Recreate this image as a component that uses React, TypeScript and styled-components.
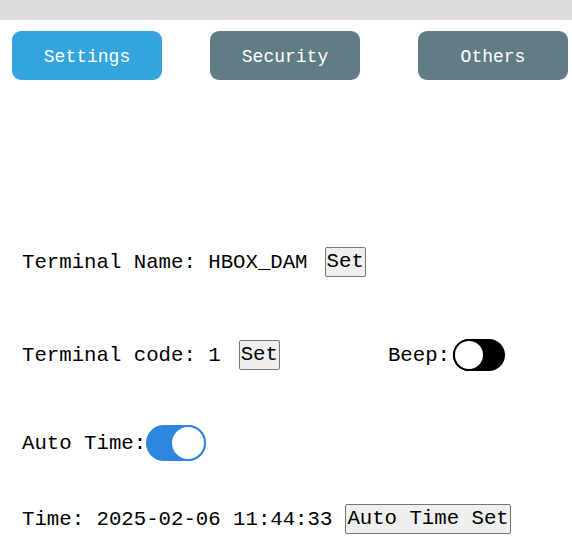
import styled, { createGlobalStyle } from "styled-components";

const GlobalStyle = createGlobalStyle`
  html, body {
    margin: 0;
    padding: 0;
    background: #ffffff;
  }
  body {
    font-family: "Liberation Mono", "Noto Sans Mono CJK SC", monospace;
    color: #000000;
  }
`;

const Page = styled.div`
  width: 572px;
  height: 557px;
  overflow: hidden;
`;

const TopBar = styled.div`
  height: 20px;
  background: #dcdcdc;
`;

const Tabs = styled.nav`
  display: flex;
  padding: 11px 0 0 12px;
`;

const Tab = styled.button<{ $active?: boolean; $offset?: number }>`
  width: 150px;
  height: 49px;
  margin-left: ${(p) => p.$offset ?? 0}px;
  border: none;
  border-radius: 9px;
  background: ${(p) => (p.$active ? "#34a4dc" : "#607c85")};
  color: #ffffff;
  font-family: "Liberation Mono", monospace;
  font-size: 18px;
  padding: 2px 0 0;
  cursor: pointer;
`;

const Content = styled.section`
  padding-left: 22px;
`;

const Row = styled.div<{ $top: number }>`
  display: flex;
  align-items: center;
  height: 40px;
  margin-top: ${(p) => p.$top}px;
  font-size: 20.7px;
  white-space: pre;
`;

const Label = styled.span<{ $gap?: number }>`
  margin-left: ${(p) => p.$gap ?? 0}px;
`;

const SetButton = styled.button<{ $gap?: number }>`
  margin-left: ${(p) => p.$gap ?? 0}px;
  height: 30px;
  padding: 0 1px;
  background: #efefef;
  border: 1px solid #767676;
  border-radius: 2px;
  font-family: "Liberation Mono", monospace;
  font-size: 20.7px;
  color: #000000;
  line-height: 1;
`;

const Toggle = styled.span<{ $on: boolean; $w: number; $h: number; $gap?: number }>`
  position: relative;
  display: inline-block;
  width: ${(p) => p.$w}px;
  height: ${(p) => p.$h}px;
  margin-left: ${(p) => p.$gap ?? 0}px;
  border-radius: ${(p) => p.$h / 2}px;
  background: ${(p) => (p.$on ? "#2e86de" : "#000000")};
  box-sizing: border-box;

  &::after {
    content: "";
    position: absolute;
    top: 0;
    ${(p) => (p.$on ? "right: 0;" : "left: 0;")}
    width: ${(p) => p.$h}px;
    height: ${(p) => p.$h}px;
    border-radius: 50%;
    background: #ffffff;
    border: 2px solid ${(p) => (p.$on ? "#2e86de" : "#000000")};
    box-sizing: border-box;
  }
`;

export default function App() {
  return (
    <Page>
      <GlobalStyle />
      <TopBar />
      <Tabs>
        <Tab $active>Settings</Tab>
        <Tab $offset={48}>Security</Tab>
        <Tab $offset={58}>Others</Tab>
      </Tabs>
      <Content>
        <Row $top={162}>
          <Label>Terminal Name: HBOX_DAM</Label>
          <SetButton $gap={17}>Set</SetButton>
        </Row>
        <Row $top={53}>
          <Label>Terminal code: 1</Label>
          <SetButton $gap={18}>Set</SetButton>
          <Label $gap={108}>Beep:</Label>
          <Toggle $on={false} $w={52} $h={32} $gap={3} />
        </Row>
        <Row $top={48}>
          <Label>Auto Time:</Label>
          <Toggle $on $w={60} $h={36} />
        </Row>
        <Row $top={36}>
          <Label>Time: 2025-02-06 11:44:33</Label>
          <SetButton $gap={13}>Auto Time Set</SetButton>
        </Row>
      </Content>
    </Page>
  );
}
